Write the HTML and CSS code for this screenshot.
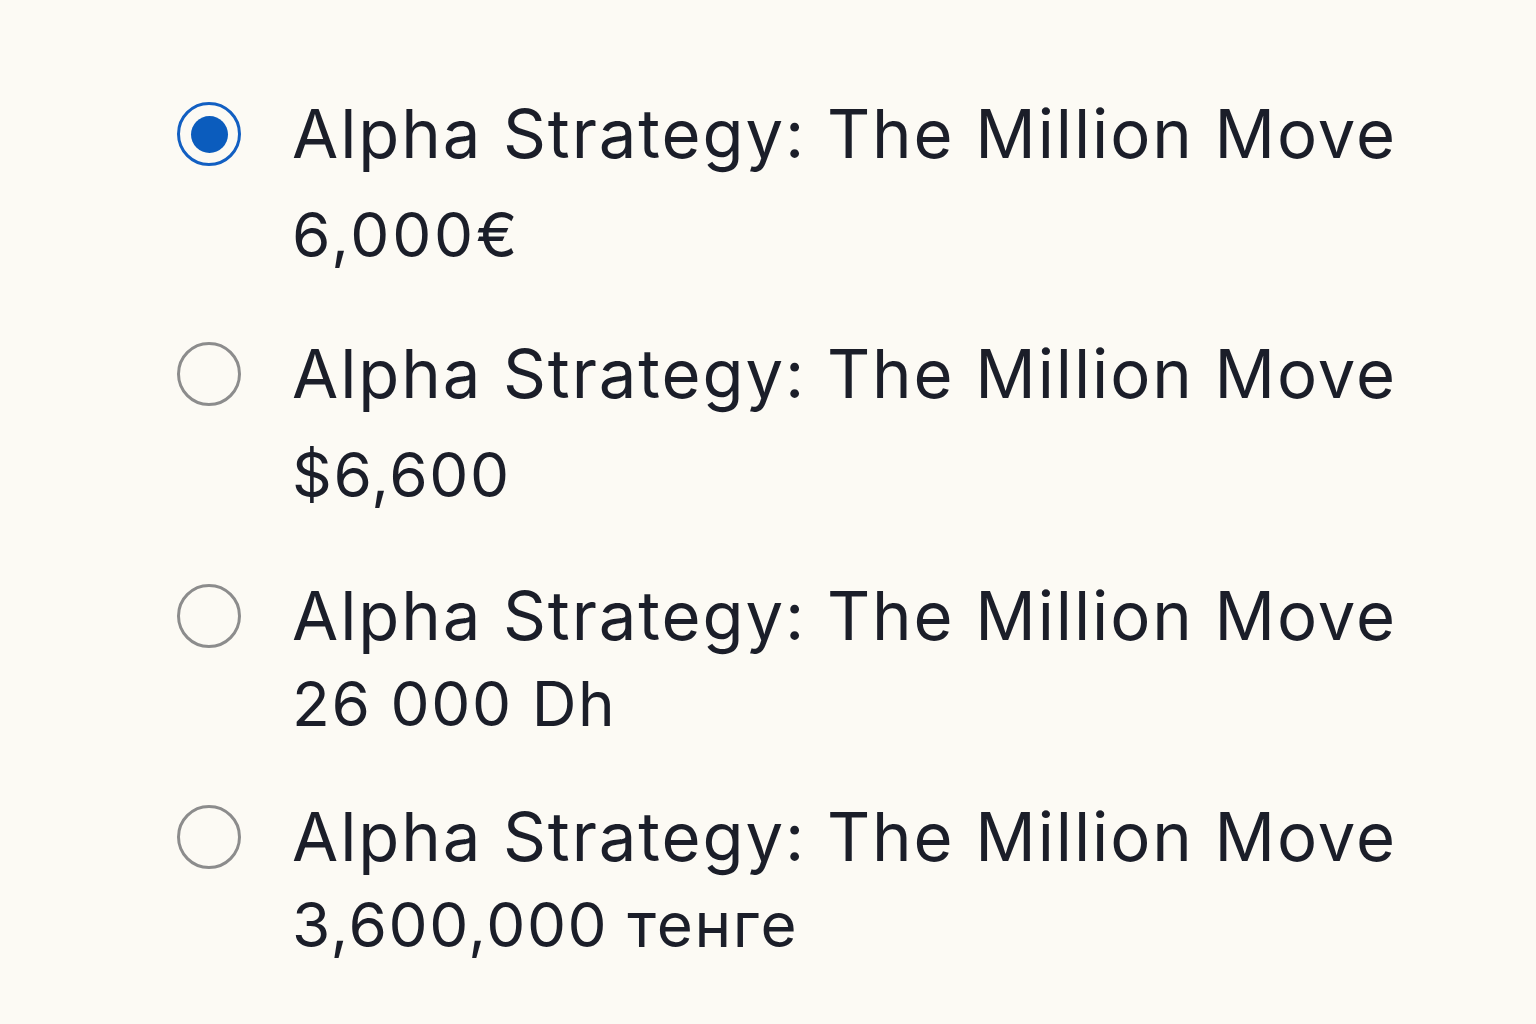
FILE: index.html
```html
<!DOCTYPE html>
<html lang="en">
<head>
<meta charset="utf-8">
<title>Choose a plan</title>
<link rel="stylesheet" href="styles.css">
</head>
<body>
<form class="plans">
  <label class="plan plan--first">
    <input type="radio" name="plan" class="plan__input" checked>
    <span class="plan__radio"></span>
    <span class="plan__text">
      <span class="plan__title">Alpha Strategy: The Million Move</span>
      <span class="plan__price plan__price--euro">6,000€</span>
    </span>
  </label>
  <label class="plan plan--second">
    <input type="radio" name="plan" class="plan__input">
    <span class="plan__radio"></span>
    <span class="plan__text">
      <span class="plan__title">Alpha Strategy: The Million Move</span>
      <span class="plan__price">$6,600</span>
    </span>
  </label>
  <label class="plan plan--third">
    <input type="radio" name="plan" class="plan__input">
    <span class="plan__radio"></span>
    <span class="plan__text">
      <span class="plan__title">Alpha Strategy: The Million Move</span>
      <span class="plan__price plan__price--tight">26 000 Dh</span>
    </span>
  </label>
  <label class="plan plan--fourth">
    <input type="radio" name="plan" class="plan__input">
    <span class="plan__radio"></span>
    <span class="plan__text">
      <span class="plan__title">Alpha Strategy: The Million Move</span>
      <span class="plan__price plan__price--tight">3,600,000 тенге</span>
    </span>
  </label>
</form>
</body>
</html>
```
FILE: styles.css
```css
html, body {
  margin: 0;
  padding: 0;
}

body {
  background: #fcfaf4;
  color: #1b1e29;
  font-family: Inter, "Noto Sans", "DejaVu Sans", sans-serif;
  width: 1536px;
  height: 1024px;
  overflow: hidden;
}

.plans {
  display: flex;
  flex-direction: column;
  padding: 94px 0 0 177px;
}

.plan {
  display: flex;
  align-items: flex-start;
  gap: 51px;
  cursor: pointer;
}

.plan--second { margin-top: 63px; }
.plan--third { margin-top: 65px; }
.plan--fourth { margin-top: 57px; }

/* native input stays in the form but is hidden; the span draws the control */
.plan__input {
  position: absolute;
  opacity: 0;
  pointer-events: none;
}

.plan__radio {
  flex: none;
  box-sizing: border-box;
  width: 64px;
  height: 64px;
  margin-top: 8px;
  border: 3px solid #8c8c8c;
  border-radius: 50%;
  display: flex;
  align-items: center;
  justify-content: center;
}

.plan__input:checked + .plan__radio {
  border-color: #125fc2;
}

.plan__input:checked + .plan__radio::after {
  content: "";
  width: 37px;
  height: 37px;
  border-radius: 50%;
  background: #0b5cbd;
}

.plan__text {
  display: flex;
  flex-direction: column;
}

.plan__title {
  font-size: 67px;
  line-height: 80px;
  letter-spacing: 1.9px;
  white-space: nowrap;
}

.plan__price {
  font-size: 62px;
  line-height: 72px;
  letter-spacing: 1.6px;
  margin-top: 25px;
  white-space: nowrap;
}

.plan__price--euro {
  letter-spacing: 2.8px;
}

.plan__price--tight {
  margin-top: 12px;
}
```
